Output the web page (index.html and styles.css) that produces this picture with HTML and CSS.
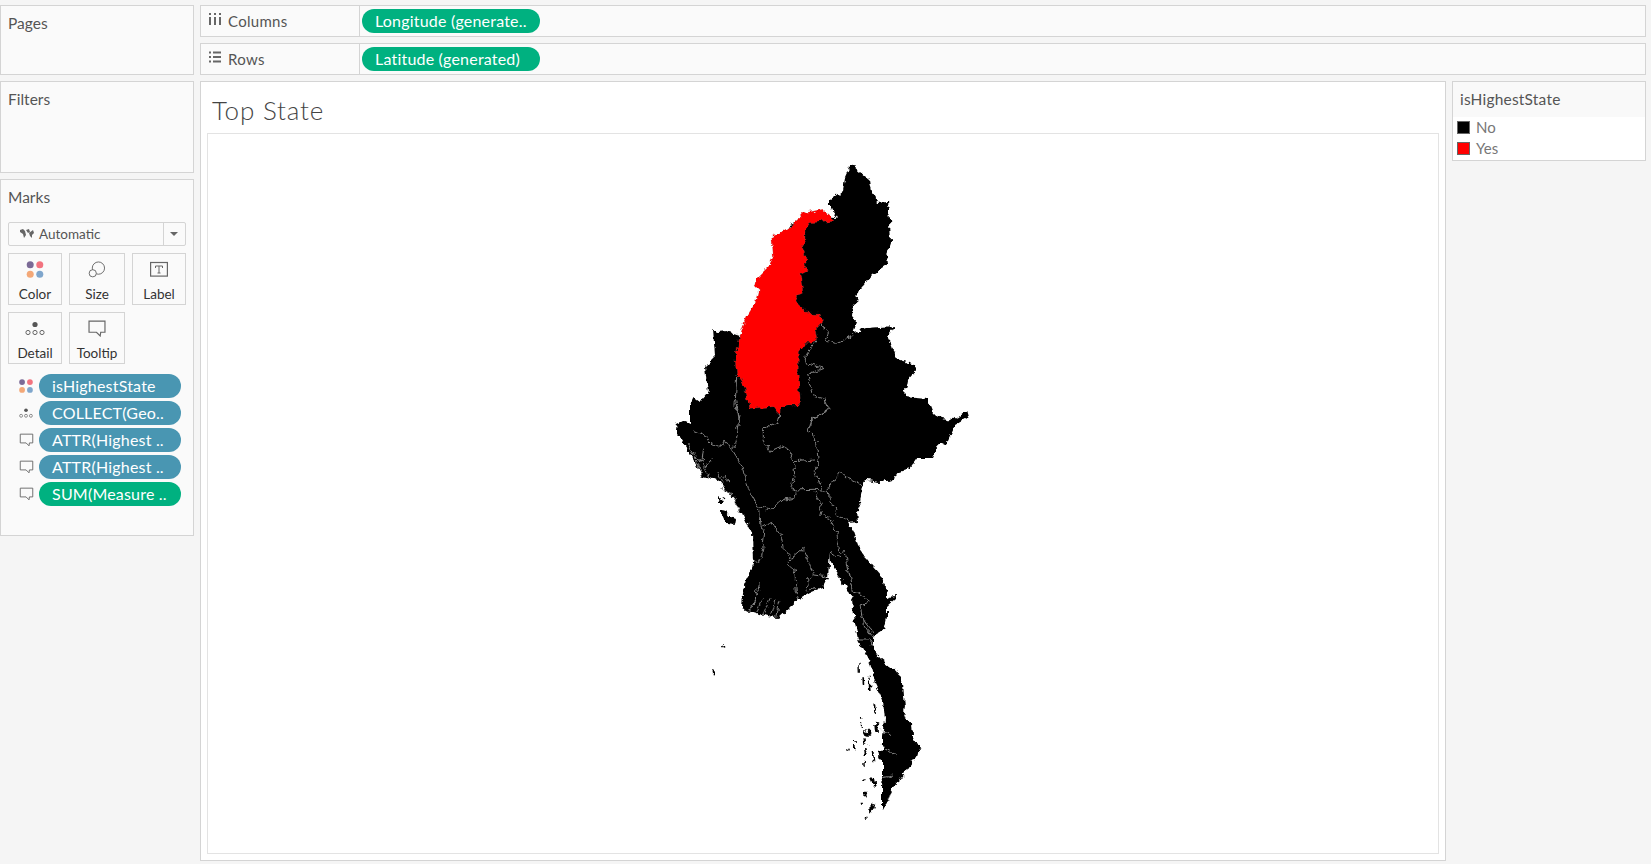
FILE: index.html
```html
<!DOCTYPE html>
<html lang="en">

<head>
    <meta charset="UTF-8">
    <meta name="viewport" content="width=device-width, initial-scale=1.0">
    <title>Top State</title>
    <link rel="stylesheet" href="styles.css">
</head>

<body>
    <svg class="defs" width="0" height="0">
        <symbol id="i-color" viewBox="0 0 16 16">
            <circle cx="3.5" cy="3.5" r="3.3" fill="#7b6a96" />
            <circle cx="12.5" cy="3.5" r="3.3" fill="#f2737f" />
            <circle cx="3.5" cy="12.5" r="3.3" fill="#f3a878" />
            <circle cx="12.5" cy="12.5" r="3.3" fill="#7fa6cc" />
        </symbol>
        <symbol id="i-size" viewBox="0 0 18 18">
            <circle cx="10.5" cy="7.5" r="6.5" fill="none" stroke="#666" />
            <circle cx="4.5" cy="13" r="3.8" fill="#fafafa" stroke="#666" />
        </symbol>
        <symbol id="i-label" viewBox="0 0 20 17">
            <rect x="1.6" y="1.5" width="16.8" height="13.6" fill="none" stroke="#666" stroke-width="1.2" />
            <path d="M6.500 5h7v2M10 5v7M8.500 12h3M6.500 5v2" fill="none" stroke="#666" />
        </symbol>
        <symbol id="i-detail" viewBox="0 0 20 14">
            <circle cx="10" cy="3" r="2.6" fill="#555" />
            <circle cx="3" cy="11" r="2.1" fill="none" stroke="#666" />
            <circle cx="10" cy="11" r="2.1" fill="none" stroke="#666" />
            <circle cx="17" cy="11" r="2.1" fill="none" stroke="#666" />
        </symbol>
        <symbol id="i-tooltip" viewBox="0 0 18 16">
            <path d="M1.5 1h15v10.500h-4l-.500 3.500-3.500-3.500h-7z" fill="none" stroke="#666" stroke-width="1.100" />
        </symbol>
        <filter id="rough" x="-5%" y="-5%" width="110%" height="110%" color-interpolation-filters="sRGB">
            <feTurbulence type="fractalNoise" baseFrequency="0.16" numOctaves="3" seed="4" />
            <feDisplacementMap in="SourceGraphic" scale="7" xChannelSelector="R" yChannelSelector="G" />
        </filter>
    </svg>

    <div class="side">
        <section class="panel pages"><h3>Pages</h3></section>
        <section class="panel filters"><h3>Filters</h3></section>
        <section class="panel marks">
            <h3>Marks</h3>
            <div class="mark-type">
                <svg class="map-glyph" viewBox="0 0 14 10">
                    <path d="M0 1l3-1 2 2 1 4-2 3-1-4-3-2zM6 1l3-1 1 3-2 1zM9 4l4-3 1 3-2 2v3l-2-2z" fill="#666" />
                </svg>
                <span>Automatic</span>
                <i class="caret"></i>
            </div>
            <div class="cards">
                <div class="card"><svg><use href="#i-color" /></svg><span>Color</span></div>
                <div class="card"><svg><use href="#i-size" /></svg><span>Size</span></div>
                <div class="card"><svg><use href="#i-label" /></svg><span>Label</span></div>
                <div class="card"><svg><use href="#i-detail" /></svg><span>Detail</span></div>
                <div class="card"><svg><use href="#i-tooltip" /></svg><span>Tooltip</span></div>
            </div>
            <ul class="fields">
                <li><svg class="f-color"><use href="#i-color" /></svg><span class="pill blue">isHighestState</span></li>
                <li><svg class="f-detail"><use href="#i-detail" /></svg><span class="pill blue">COLLECT(Geo..</span></li>
                <li><svg class="f-tip"><use href="#i-tooltip" /></svg><span class="pill blue">ATTR(Highest ..</span></li>
                <li><svg class="f-tip"><use href="#i-tooltip" /></svg><span class="pill blue">ATTR(Highest ..</span></li>
                <li><svg class="f-tip"><use href="#i-tooltip" /></svg><span class="pill green">SUM(Measure ..</span></li>
            </ul>
        </section>
    </div>

    <div class="main">
        <div class="shelf">
            <div class="shelf-name">
                <svg class="shelf-icon" viewBox="0 0 12 12">
                    <path d="M1 0v2M1 4v8M6 0v2M6 4v8M11 0v2M11 4v8" stroke="#666" stroke-width="2" fill="none" />
                </svg>
                Columns
            </div>
            <span class="pill green wide">Longitude (generate..</span>
        </div>
        <div class="shelf">
            <div class="shelf-name">
                <svg class="shelf-icon" viewBox="0 0 12 12">
                    <path d="M0 1.500h2M4 1.500h8M0 6h2M4 6h8M0 10.500h2M4 10.500h8" stroke="#666" stroke-width="2" fill="none" />
                </svg>
                Rows
            </div>
            <span class="pill green wide">Latitude (generated)</span>
        </div>

        <div class="content">
            <section class="view">
                <h1>Top State</h1>
                <div class="map">
                    <svg viewBox="207 133 1231 721" width="1231" height="721">
                        <g filter="url(#rough)">
                            <!-- country outline, clockwise from the notch above the red state -->
                            <path fill="#000" d="M838 218L830 207 830 200 843 190 845 178 850 167 853 166 860 172 870 180 872 193 878 203 888 202 890 220 891 243 887 255 888 265 880 270 872 275 862 287 857 293 858 300 852 305 851 315 857 322 853 333 867 328 895 326 888 337 893 347 897 359 915 365 916 370 908 380 905 396 927 398 933 413 942 418 953 420 967 410 969 417 955 425 947 442 937 447 932 458 917 458 910 468 898 472 893 480 880 482 867 480 862 487 860 503 857 510 858 522 848 523 853 532 858 547 873 567 882 577 888 597 895 595 895 600 887 607 887 617 884 630 873 637 873 648 880 658 897 672 903 683 905 707 903 717 912 723 913 737 920 750 907 770 900 780 892 787 892 793 883 810 882 807 882 787 883 777 883 760 883 737 885 720 883 700 875 683 870 663 858 640 855 623 852 600 845 585 837 573 830 560 830 553 828 577 823 587 810 592 800 598 790 607 778 618 767 617 750 612 742 608 743 593 748 577 753 563 752 533 743 513 740 513 735 500 718 480 703 477 693 458 680 437 676 430 677 423 683 420 690 423 690 403 693 397 700 402 708 393 705 367 715 357 713 328 718 332 727 331 740 335 770 290 790 225 815 215 835 217z" />
                            <!-- islands -->
                            <path fill="#000" d="M719 510l7 1 5 6 5 2-1 5-7-1-5-4zM718 496l6 3 1 4-5 0z" />
                            <g transform="translate(700 620) scale(.3333)" fill="#000">
                                <circle cx="68" cy="78" r="5" /><rect x="41" y="151" width="6" height="12" />
                                <path d="M520 250l6 4 2 30-5-2zM525 305l12 4 3 26-12 0zM492 330l14 2 8 18-12 0zM535 392l18 0 0 24-14-2zM515 395l6 6 2 24-5-6zM510 472l12 2 6 30-6-2zM490 515l10 0 4 16-10 2zM512 550l14 4-8 22-8 8z" />
                                <path d="M475 125h4l1 30h-4zM487 175h5l1 16h-5zM505 170h4l3 40h-5zM480 288h5l-1 8h-4zM480 310h4l-2 14h-3zM462 360h6l-1 8h-5zM462 378h5v10h-5zM442 386h8l-2 6h-6zM490 355h7l2 16h-7zM492 385h5l3 20h-6zM490 425h5l-1 14h-4zM487 478h7l-1 6h-6zM485 545h7l-1 6h-5zM495 590h5l-1 6h-5z" />
                            </g>
                            <path fill="#f00" stroke="#888" stroke-width=".6" transform="translate(640 150) scale(.3333)" d="M300 555L320 500 345 460 355 420 345 410 350 385 385 350 400 320 395 260 430 245 470 215 490 190 545 178 585 210 510 218 495 240 495 270 485 290 497 320 500 360 480 370 490 430 465 440 480 470 500 490 540 490 545 520 525 540 530 565 515 580 495 580 475 605 475 680 482 765 440 765 415 790 400 770 330 775 310 700 290 670 285 630z" />

                            <!-- state borders -->
                            <g class="borders" transform="translate(640 150) scale(.3333)">
                                <path d="M540 525L565 545 560 570 585 580 640 556M530 570L500 610 495 640 550 655 500 675 520 735 555 745 570 780 515 805 512 835M290 680L285 770 300 800 290 835M415 790L415 810 400 825 370 840" />
                            </g>
                            <g class="borders" transform="translate(660 400) scale(.3333)">
                                <path d="M355 40L350 65 310 90 310 120 330 155 375 135 400 180 405 230 395 265 408 275 405 295 370 300 335 330 295 320M230 0L238 70 225 140 215 150M100 90L135 105 150 130 185 140 195 120 215 150 250 205 265 265 295 320 300 380 315 390 305 470 295 490 280 480M300 380L335 370 365 410 370 450 395 475 385 485 405 520 410 590 415 600M395 475L430 445 445 480 460 525 500 530M440 545L455 530M440 545L445 570 465 565M405 185L465 180 475 190 460 215 490 265 505 285M395 270L465 268 490 270M475 190L470 130 475 120 445 95 455 55 505 30 495 0M505 285L505 265 540 215 575 240 605 255M505 285L530 345 555 355 565 370M465 275L485 325 480 345 510 355 530 400 540 460 555 455 570 530 580 570 630 605 600 615 610 670 640 715M540 470L510 460" />
                                <!-- coastal inlets -->
                                <path d="M85 130L110 180 130 230M105 160L125 190 150 235M130 150L125 195M160 175L135 205M170 215L190 250M185 225L205 245M195 225L210 250M180 260L220 285M225 290L235 340M295 550L285 600 265 635M310 595L290 635M330 595L310 645M345 600L330 650M360 600L350 650M300 570L275 615" />
                            </g>
                            <g class="borders" transform="translate(700 620) scale(.3333)">
                                <path d="M490 0L520 40M475 60L510 60 520 75M545 330L570 350M545 375L590 410M550 470L575 465M560 550L575 515" />
                            </g>
                        </g>
                    </svg>
                </div>
            </section>

            <aside class="legend">
                <h3>isHighestState</h3>
                <div class="legend-row"><i class="swatch black"></i><span>No</span></div>
                <div class="legend-row"><i class="swatch red"></i><span>Yes</span></div>
            </aside>
        </div>
    </div>
</body>

</html>
```

FILE: styles.css
```css
* {
    box-sizing: border-box;
}

html,
body {
    height: 100%;
}

body {
    margin: 0;
    padding: 5px 5px 3px 0;
    display: flex;
    gap: 6px;
    overflow: hidden;
    background-color: #f5f5f5;
    font-family: "Lato", sans-serif;
    color: #555;
}

.defs {
    position: absolute;
}

h1,
h3,
ul {
    margin: 0;
    padding: 0;
    font-weight: normal;
}

.side {
    width: 194px;
    flex: none;
    display: flex;
    flex-direction: column;
    gap: 6px;
}

.panel {
    background-color: #fafafa;
    border: 1px solid #d4d4d4;
    padding: 8px 7px;
}

.panel h3 {
    font-size: 15.500px;
    line-height: 19px;
}

.pages {
    height: 70px;
}

.filters {
    height: 92px;
}

.marks {
    height: 357px;
}

.mark-type {
    margin-top: 15px;
    height: 24px;
    width: 178px;
    display: flex;
    align-items: center;
    padding-left: 11px;
    border: 1px solid #d4d4d4;
    border-radius: 2px;
    font-size: 13.500px;
    position: relative;
}

.map-glyph {
    width: 14px;
    height: 10px;
    margin-right: 5px;
}

.caret {
    position: absolute;
    right: 0;
    top: 0;
    bottom: 0;
    width: 22px;
    border-left: 1px solid #d4d4d4;
}

.caret::after {
    content: "";
    position: absolute;
    left: 6px;
    top: 9px;
    border: 4px solid transparent;
    border-top: 4px solid #666;
}

.cards {
    margin-top: 7px;
    display: grid;
    grid-template-columns: 54px 56px 54px;
    grid-auto-rows: 52px;
    column-gap: 7px;
    row-gap: 7px;
}

.card {
    border: 1px solid #d4d4d4;
    padding-top: 7px;
    display: flex;
    flex-direction: column;
    align-items: center;
    font-size: 13.500px;
    color: #333;
}

.card svg {
    width: 20px;
    height: 17px;
}

.card span {
    line-height: 18px;
    margin-top: 7px;
}

.fields {
    list-style: none;
    margin-top: 10px;
}

.fields li {
    height: 24px;
    margin-bottom: 3px;
    display: flex;
    align-items: center;
    position: relative;
    padding-left: 31px;
}

.fields svg {
    position: absolute;
    left: 11px;
}

.f-color {
    width: 14px;
    height: 14px;
}

.f-detail {
    width: 14px;
    height: 10px;
}

.f-tip {
    width: 15px;
    height: 14px;
}

.pill {
    display: block;
    height: 24px;
    width: 142px;
    padding-left: 13px;
    border-radius: 12px;
    font-size: 16px;
    letter-spacing: .2px;
    line-height: 24px;
    color: #fff;
    white-space: nowrap;
}

.pill.wide {
    width: 178px;
}

.blue {
    background-color: #4996b2;
}

.green {
    background-color: #00b180;
}

.main {
    flex: 1;
    min-width: 0;
    display: flex;
    flex-direction: column;
    gap: 6px;
}

.shelf {
    height: 32px;
    flex: none;
    display: flex;
    align-items: center;
    background-color: #fafafa;
    border: 1px solid #d4d4d4;
}

.shelf-name {
    width: 159px;
    height: 100%;
    margin-right: 2px;
    padding-left: 8px;
    display: flex;
    align-items: center;
    gap: 7px;
    border-right: 1px solid #d4d4d4;
    font-size: 15px;
    letter-spacing: .3px;
}

.shelf-icon {
    width: 12px;
    height: 12px;
    margin-top: -4px;
}

.content {
    flex: 1;
    display: flex;
    gap: 6px;
    min-height: 0;
}

.view {
    flex: 1;
    background-color: #fff;
    border: 1px solid #d4d4d4;
    padding: 0 6px;
}

.view h1 {
    height: 51px;
    padding: 12px 5px 0;
    font-weight: 300;
    font-size: 26px;
    line-height: 32px;
    letter-spacing: .8px;
    color: #444;
}

.map {
    height: 721px;
    border: 1px solid #e3e3e3;
    overflow: hidden;
}

.map svg {
    display: block;
    margin: -1px;
}

.borders path {
    fill: none;
    stroke: #858585;
    stroke-width: 3;
}

.legend {
    width: 194px;
    flex: none;
    height: 80px;
    background-color: #fff;
    border: 1px solid #d4d4d4;
}

.legend h3 {
    height: 35px;
    padding: 8px 7px 0;
    background-color: #f9f9f9;
    font-size: 15.500px;
    letter-spacing: .2px;
    line-height: 19px;
}

.legend-row {
    height: 21px;
    padding-left: 4px;
    display: flex;
    align-items: center;
    gap: 6px;
    font-size: 15px;
    color: #777;
}

.legend-row span {
    line-height: 19px;
    margin-top: -1px;
}

.swatch {
    width: 13px;
    height: 13px;
    border: 1px solid #666;
}

.swatch.black {
    background-color: #000;
}

.swatch.red {
    background-color: #f00;
}
```
